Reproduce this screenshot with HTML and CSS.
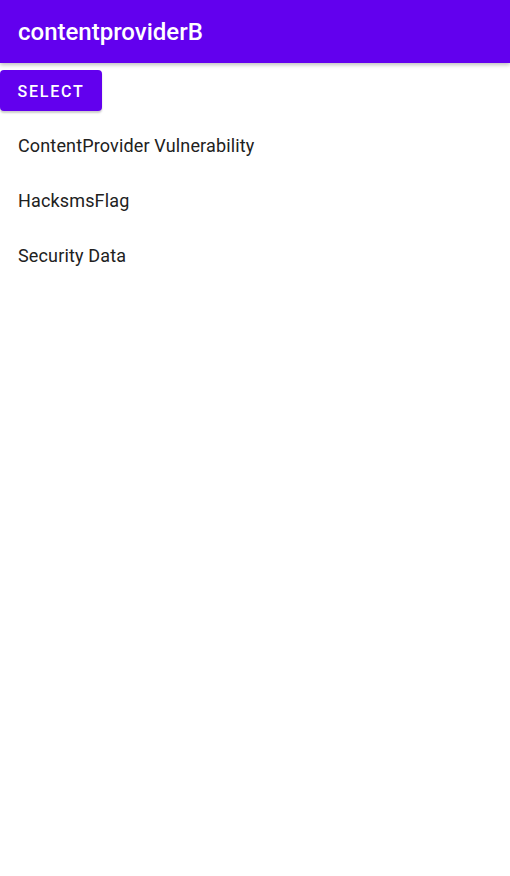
FILE: index.html
```html
<!DOCTYPE html>
<html lang="en">
<head>
    <meta charset="UTF-8">
    <meta name="viewport" content="width=device-width, initial-scale=1.0">
    <title>contentproviderB</title>
    <link rel="stylesheet" href="styles.css">
</head>
<body>
    <div class="app-bar">
        <h1>contentproviderB</h1>
    </div>

    <button class="select-button">Select</button>

    <ul class="item-list">
        <li>ContentProvider Vulnerability</li>
        <li>HacksmsFlag</li>
        <li>Security Data</li>
    </ul>
</body>
</html>
```

FILE: styles.css
```css
* {
    box-sizing: border-box;
    font-family: Roboto, 'Liberation Sans', sans-serif;
}

body {
    margin: 0;
    background-color: #ffffff;
}

.app-bar {
    background-color: #6200EE;
    height: 63px;
    display: flex;
    align-items: center;
    padding: 0 18px;
    box-shadow: 0 2px 4px rgba(0, 0, 0, 0.25);
}

h1 {
    margin: 0;
    color: white;
    font-size: 24px;
    font-weight: 500;
}

.select-button {
    display: block;
    margin-top: 7px;
    height: 41px;
    width: 102px;
    padding: 2px 0 0;
    background-color: #6200EE;
    color: white;
    border: none;
    border-radius: 4px;
    font-size: 16px;
    font-weight: 500;
    letter-spacing: 1.8px;
    text-transform: uppercase;
    box-shadow: 0 2px 2px rgba(0, 0, 0, 0.2);
    cursor: pointer;
}

.item-list {
    list-style: none;
    margin: 7px 0 0;
    padding: 0;
}

.item-list li {
    height: 55px;
    display: flex;
    align-items: center;
    padding: 0 18px;
    font-size: 18px;
    letter-spacing: 0.15px;
    color: #212121;
}
```
